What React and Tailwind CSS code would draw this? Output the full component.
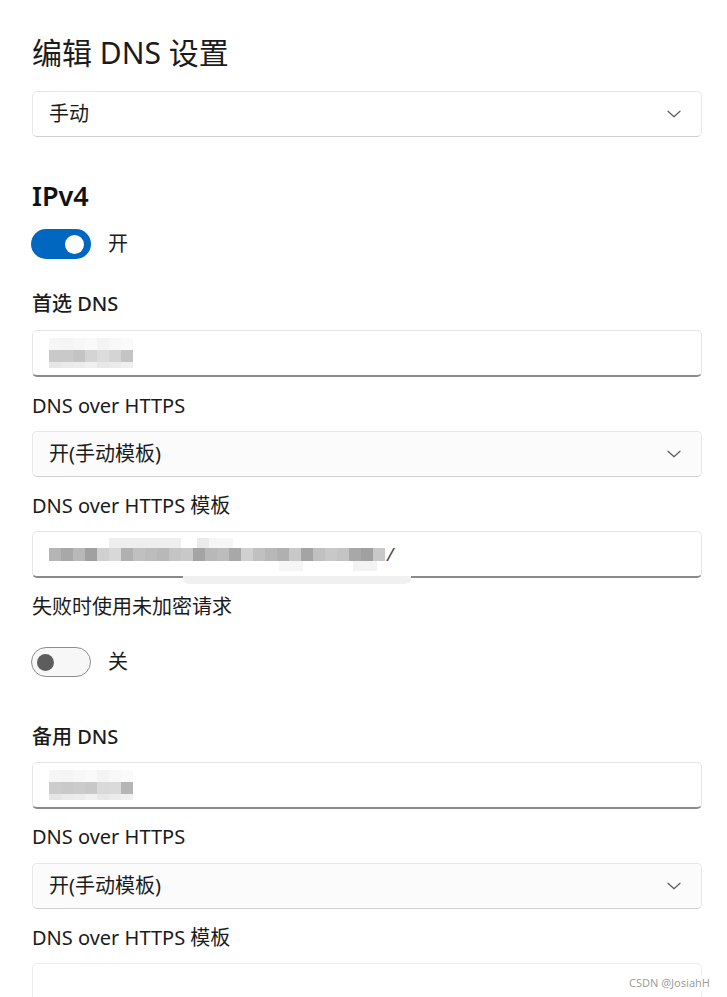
import React from "react";

const font = { fontFamily: '"Noto Sans", "Noto Sans CJK SC", sans-serif' };

function Chevron() {
  return (
    <svg width="14" height="8" viewBox="0 0 14 8" fill="none">
      <path d="M1 1.2 L7 6.8 L13 1.2" stroke="#5c5c5c" strokeWidth="1.2" strokeLinecap="round" strokeLinejoin="round" />
    </svg>
  );
}

function Dropdown({ text, plain }) {
  return (
    <div
      className={
        "flex h-[46px] w-[670px] items-center justify-between rounded-[5px] border border-[#e8e8e8] border-b-[#cfcfcf] pl-4 pr-5 " +
        (plain ? "bg-white" : "bg-[#fbfbfb]")
      }
    >
      <span className="text-[20px] text-[#1b1b1b]">{text}</span>
      <Chevron />
    </div>
  );
}

const shortTop = ["bg-[#f6f6f6]", "bg-[#f5f5f5]", "bg-[#f7f7f7]", "bg-[#f9f9f9]", "bg-[#f4f4f4]", "bg-[#f8f8f8]", "bg-[#fafafa]"];
const shortMid = ["bg-[#c9c9c9]", "bg-[#c9c9c9]", "bg-[#c4c4c4]", "bg-[#d4d4d4]", "bg-[#dcdcdc]", "bg-[#d4d4d4]", "bg-[#c4c4c4]"];
const shortBot = ["bg-[#e6e6e6]", "bg-[#eaeaea]", "bg-[#ececec]", "bg-[#f0f0f0]", "bg-[#e8e8e8]", "bg-[#ebebeb]", "bg-[#efefef]"];

const shortMid2 = ["bg-[#cccccc]", "bg-[#c9c9c9]", "bg-[#cbcbcb]", "bg-[#c8c8c8]", "bg-[#d9d9d9]", "bg-[#dadada]", "bg-[#b5b5b5]"];

function ShortMosaic({ mid }) {
  return (
    <div className="flex flex-col">
      <div className="flex">
        {shortTop.map((c, i) => (
          <div key={i} className={"h-[12px] w-[12px] " + c} />
        ))}
      </div>
      <div className="flex">
        {mid.map((c, i) => (
          <div key={i} className={"h-[12px] w-[12px] " + c} />
        ))}
      </div>
      <div className="flex">
        {shortBot.map((c, i) => (
          <div key={i} className={"h-[6px] w-[12px] " + c} />
        ))}
      </div>
    </div>
  );
}

const longMid = [
  "bg-[#b5b5b5]", "bg-[#a8a8a8]", "bg-[#b8b8b8]", "bg-[#a0a0a0]", "bg-[#d0d0d0]", "bg-[#d8d8d8]", "bg-[#b0b0b0]",
  "bg-[#c0c0c0]", "bg-[#bcbcbc]", "bg-[#b8b8b8]", "bg-[#c4c4c4]", "bg-[#c8c8c8]", "bg-[#a4a4a4]", "bg-[#b8b8b8]",
  "bg-[#bcbcbc]", "bg-[#a8a8a8]", "bg-[#d0d0d0]", "bg-[#c0c0c0]", "bg-[#b8b8b8]", "bg-[#b0b0b0]", "bg-[#c8c8c8]",
  "bg-[#a4a4a4]", "bg-[#c0c0c0]", "bg-[#c8c8c8]", "bg-[#c4c4c4]", "bg-[#a8a8a8]", "bg-[#a0a0a0]", "bg-[#c8c8c8]",
];

function LongMosaic() {
  return (
    <div className="relative flex items-center">
      <div className="flex flex-col">
        <div className="flex h-[10px] pl-[60px]">
          <div className="w-[72px] bg-[#eeeeee]" />
          <div className="w-[16px] bg-[#ffffff]" />
          <div className="w-[12px] bg-[#ebebeb]" />
          <div className="w-[24px] bg-[#f6f6f6]" />
        </div>
        <div className="flex">
          {longMid.map((c, i) => (
            <div key={i} className={"h-[13px] w-[12px] " + c} />
          ))}
        </div>
        <div className="flex h-[10px]">
          <div className="w-[230px]" />
          <div className="w-[24px] bg-[#f6f6f6]" />
          <div className="w-[50px]" />
          <div className="w-[24px] bg-[#f3f3f3]" />
        </div>
      </div>
      <span className="ml-[2px] text-[18px] italic leading-none text-[#444]">/</span>
    </div>
  );
}

function Input({ children, smudge }) {
  return (
    <div className="relative flex h-[47px] w-[670px] items-center rounded-[5px] border border-[#e6e6e6] border-b-2 border-b-[#8a8a8a] bg-white pl-4">
      {children}
      {smudge && (
        <div className="absolute bottom-[-8px] left-[150px] h-[8px] w-[228px] rounded-b-[6px] bg-[#f0f0f0]" />
      )}
    </div>
  );
}

function Toggle({ on }) {
  if (on) {
    return (
      <div className="flex h-[30px] w-[60px] items-center justify-end rounded-full bg-[#0067c0] pr-[7px]">
        <div className="h-[19px] w-[19px] rounded-full bg-white" />
      </div>
    );
  }
  return (
    <div className="flex h-[30px] w-[60px] items-center rounded-full border border-[#8d8d8d] bg-[#f7f7f7] pl-[5px]">
      <div className="h-[17px] w-[17px] rounded-full bg-[#5d5d5d]" />
    </div>
  );
}

function Label({ children, strong }) {
  return (
    <div className={"h-7 text-[20px] leading-7 text-[#1b1b1b] " + (strong ? "font-medium" : "font-normal")}>
      {children}
    </div>
  );
}

export default function App() {
  return (
    <div className="relative h-[997px] w-[727px] overflow-hidden bg-white" style={font}>
      <div className="flex flex-col pl-8 pt-[33px]">
        <div className="h-10 text-[30px] leading-10 text-[#1b1b1b]">编辑 DNS 设置</div>
        <div className="mt-[18px]">
          <Dropdown text="手动" plain />
        </div>
        <div className="mt-[41px] h-9 text-[27px] font-semibold leading-9 text-[#111]">IPv4</div>
        <div className="mt-[15px] flex items-center gap-[17px]">
          <div className="-ml-px">
            <Toggle on />
          </div>
          <span className="text-[20px] text-[#1b1b1b]">开</span>
        </div>
        <div className="mt-[31px]">
          <Label strong>首选 DNS</Label>
        </div>
        <div className="mt-[12px]">
          <Input>
            <ShortMosaic mid={shortMid} />
          </Input>
        </div>
        <div className="mt-[15px]">
          <Label>DNS over HTTPS</Label>
        </div>
        <div className="mt-[11px]">
          <Dropdown text="开(手动模板)" />
        </div>
        <div className="mt-[15px]">
          <Label>DNS over HTTPS 模板</Label>
        </div>
        <div className="mt-[11px]">
          <Input smudge>
            <LongMosaic />
          </Input>
        </div>
        <div className="mt-[15px]">
          <Label>失败时使用未加密请求</Label>
        </div>
        <div className="mt-[26px] flex items-center gap-[17px]">
          <div className="-ml-px">
            <Toggle />
          </div>
          <span className="text-[20px] text-[#1b1b1b]">关</span>
        </div>
        <div className="mt-[46px]">
          <Label strong>备用 DNS</Label>
        </div>
        <div className="mt-[11px]">
          <Input>
            <ShortMosaic mid={shortMid2} />
          </Input>
        </div>
        <div className="mt-[14px]">
          <Label>DNS over HTTPS</Label>
        </div>
        <div className="mt-[12px]">
          <Dropdown text="开(手动模板)" />
        </div>
        <div className="mt-[15px]">
          <Label>DNS over HTTPS 模板</Label>
        </div>
        <div className="mt-[11px]">
          <div className="h-[47px] w-[670px] rounded-[5px] border border-[#ececec] bg-white" />
        </div>
      </div>
      <div className="absolute bottom-[6px] right-[17px] bg-white pl-1 text-[11px] leading-4 text-[#a0a0a0]">
        CSDN @JosiahH
      </div>
    </div>
  );
}
